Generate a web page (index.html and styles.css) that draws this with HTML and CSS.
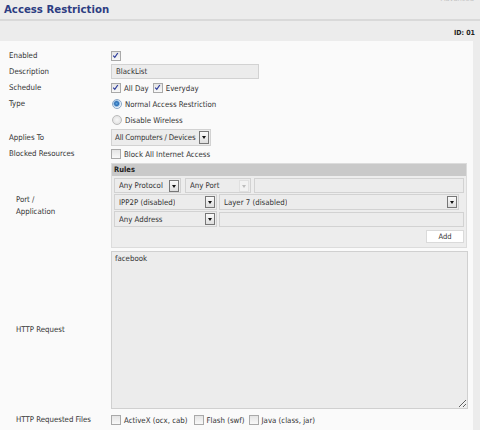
FILE: index.html
```html
<!DOCTYPE html>
<html>
<head>
<meta charset="utf-8">
<link rel="stylesheet" href="styles.css">
</head>
<body>
<div class="head">
  <h1 class="title">Access Restriction</h1>
  <span class="ghost">Advanced</span>
</div>
<div class="idline">ID: 01</div>
<div class="panel">
  <div class="row">
    <div class="lbl">Enabled</div>
    <div class="ctl"><span class="cb on"><svg viewBox="0 0 9 9" width="9" height="9"><path d="M2.2 4.6 L3.8 6.4 L6.8 2" fill="none" stroke="#2a3a9a" stroke-width="1.2"/></svg></span></div>
  </div>
  <div class="row">
    <div class="lbl">Description</div>
    <div class="ctl"><div class="input desc">BlackList</div></div>
  </div>
  <div class="row">
    <div class="lbl">Schedule</div>
    <div class="ctl">
      <span class="cb on"><svg viewBox="0 0 9 9" width="9" height="9"><path d="M2.2 4.6 L3.8 6.4 L6.8 2" fill="none" stroke="#2a3a9a" stroke-width="1.2"/></svg></span><span class="opt">All Day</span>
      <span class="cb on"><svg viewBox="0 0 9 9" width="9" height="9"><path d="M2.2 4.6 L3.8 6.4 L6.8 2" fill="none" stroke="#2a3a9a" stroke-width="1.2"/></svg></span><span class="opt">Everyday</span>
    </div>
  </div>
  <div class="row">
    <div class="lbl">Type</div>
    <div class="ctl"><span class="rd on"></span><span class="opt rdo">Normal Access Restriction</span></div>
  </div>
  <div class="row">
    <div class="lbl"></div>
    <div class="ctl"><span class="rd"></span><span class="opt rdo">Disable Wireless</span></div>
  </div>
  <div class="row tall">
    <div class="lbl">Applies To</div>
    <div class="ctl"><div class="sel applies"><span class="txt">All Computers / Devices</span><span class="arr"></span></div></div>
  </div>
  <div class="row">
    <div class="lbl">Blocked Resources</div>
    <div class="ctl"><span class="cb"></span><span class="opt">Block All Internet Access</span></div>
  </div>
  <div class="row block">
    <div class="lbl ind">Port /<br>Application</div>
    <div class="ctl">
      <div class="rules">
        <div class="rhead">Rules</div>
        <div class="rrow">
          <div class="sel w67"><span class="txt">Any Protocol</span><span class="arr"></span></div>
          <div class="sel w66 gap4"><span class="txt">Any Port</span><span class="arr dis"></span></div>
          <div class="input fill gap3"></div>
        </div>
        <div class="rrow">
          <div class="sel w103"><span class="txt">IPP2P (disabled)</span><span class="arr"></span></div>
          <div class="sel w240 gap2"><span class="txt">Layer 7 (disabled)</span><span class="arr"></span></div>
        </div>
        <div class="rrow">
          <div class="sel w103"><span class="txt">Any Address</span><span class="arr"></span></div>
          <div class="input fill gap2"></div>
        </div>
        <div class="radd"><span class="btn">Add</span></div>
      </div>
    </div>
  </div>
  <div class="row block">
    <div class="lbl ind">HTTP Request</div>
    <div class="ctl"><textarea class="area" readonly>facebook</textarea></div>
  </div>
  <div class="row">
    <div class="lbl ind">HTTP Requested Files</div>
    <div class="ctl">
      <span class="cb"></span><span class="opt f1">ActiveX (ocx, cab)</span>
      <span class="cb"></span><span class="opt f2">Flash (swf)</span>
      <span class="cb"></span><span class="opt">Java (class, jar)</span>
    </div>
  </div>
</div>
</body>
</html>
```
FILE: styles.css
```css
html, body {
  margin: 0;
  padding: 0;
}
body {
  background: #ececec;
  font-family: "DejaVu Sans Condensed", "DejaVu Sans", sans-serif;
  font-size: 7.8px;
  color: #333;
  width: 480px;
  height: 430px;
  overflow: hidden;
}
.head {
  display: flex;
  justify-content: space-between;
  align-items: flex-start;
  height: 19px;
  border-bottom: 2px solid #d9d9d9;
}
.title {
  margin: 0;
  padding: 3px 0 0 4px;
  font-size: 11.3px;
  font-weight: bold;
  color: #2d3d82;
  line-height: 14px;
}
.ghost {
  color: #c4c4c4;
  margin-top: -6px;
  margin-right: 6px;
  font-size: 7.5px;
  line-height: 9px;
}
.idline {
  text-align: right;
  font-weight: bold;
  font-size: 7px;
  padding: 8px 5px 0 0;
  height: 12px;
  color: #222;
}
.panel {
  background: #fafafa;
  width: 473px;
  padding-top: 7px;
  height: 400px;
  box-sizing: border-box;
}
.row {
  display: flex;
  align-items: center;
  min-height: 16px;
}
.row.tall {
  min-height: 17px;
  margin-top: 1px;
}
.row.block {
  margin-top: 1px;
  margin-bottom: 3px;
}
.lbl {
  width: 102px;
  padding-left: 9px;
  flex: none;
  line-height: 12px;
}
.lbl.ind {
  padding-left: 16px;
  width: 95px;
}
.ctl {
  display: flex;
  align-items: center;
}
.cb {
  width: 8px;
  height: 8px;
  border: 1px solid #a9a9a9;
  background: linear-gradient(#e4e4e4, #f8f8f8);
  display: inline-flex;
  flex: none;
}
.cb svg {
  margin: -1px 0 0 -1px;
}
.opt {
  margin-left: 3px;
  margin-right: 4px;
}
.opt.rdo { margin-left: 2px; }
.opt.f1 { margin-right: 6px; }
.opt.f2 { margin-right: 4px; }
.rd {
  width: 8px;
  height: 8px;
  border: 1px solid #bbb;
  border-radius: 50%;
  background: radial-gradient(circle at 50% 50%, #f7f7f7, #dcdcdc);
  margin-left: 1px;
  margin-right: 1px;
  flex: none;
}
.rd.on {
  background: radial-gradient(circle at 45% 45%, #5fa8e0 0, #2c6db5 2px, #9cc2e6 3px, #eef4fb 4px);
  border-color: #8aa7c7;
}
.input {
  background: #ececec;
  border: 1px solid #d2d2d2;
  box-sizing: border-box;
  height: 15px;
  line-height: 13px;
  padding-left: 4px;
}
.input.desc {
  width: 148px;
  margin-top: -2px;
}
.sel {
  display: flex;
  align-items: center;
  justify-content: space-between;
  background: #ececec;
  border: 1px solid #d2d2d2;
  box-sizing: border-box;
  height: 16px;
  padding: 0 1px 0 4px;
  flex: none;
}
.sel .txt {
  white-space: nowrap;
  overflow: hidden;
}
.arr {
  width: 10px;
  height: 12px;
  box-sizing: border-box;
  border: 1px solid #777;
  background: linear-gradient(#fafafa, #dedede);
  position: relative;
  flex: none;
}
.arr::after {
  content: "";
  position: absolute;
  left: 2px;
  top: 4px;
  border-left: 2.5px solid transparent;
  border-right: 2.5px solid transparent;
  border-top: 3px solid #111;
}
.arr.dis {
  border-color: #e0e0e0;
  background: #f2f2f2;
}
.arr.dis::after {
  border-top-color: #bdbdbd;
}
.applies {
  width: 100px;
  height: 17px;
  padding-left: 3px;
}
.applies .txt {
  overflow: visible;
  letter-spacing: -0.15px;
}
.applies .arr { height: 13px; }
.w67 { width: 67px; height: 15px; }
.w66 { width: 66px; height: 15px; }
.w103 { width: 103px; }
.w240 { width: 240px; }
.w67 .arr, .w66 .arr { height: 12px; }
.gap2 { margin-left: 2px; }
.gap3 { margin-left: 3px; }
.gap4 { margin-left: 4px; }
.fill {
  flex: 1;
  height: 15px;
}
.rules {
  width: 356px;
  box-sizing: border-box;
  border: 1px solid #dcdcdc;
  background: #ededed;
  padding-bottom: 4px;
}
.rhead {
  background: #c9c9c9;
  font-weight: bold;
  font-size: 7.5px;
  height: 12px;
  line-height: 12px;
  padding-left: 2px;
  color: #222;
  margin-bottom: 2px;
}
.rrow {
  display: flex;
  align-items: center;
  padding: 0 2px;
  margin-bottom: 1px;
}
.radd {
  display: flex;
  justify-content: flex-end;
  padding: 2px 2px 0 0;
}
.btn {
  background: #fff;
  border: 1px solid #dadada;
  width: 38px;
  height: 13px;
  box-sizing: border-box;
  text-align: center;
  line-height: 11px;
  font-size: 7.5px;
}
.area {
  width: 357px;
  height: 158px;
  box-sizing: border-box;
  background: #ececec;
  border: 1px solid #d0d0d0;
  font-family: "DejaVu Sans Condensed", "DejaVu Sans", sans-serif;
  font-size: 7.8px;
  color: #333;
  padding: 2px 3px;
  margin: 0;
  resize: both;
  outline: none;
  display: block;
}
```
